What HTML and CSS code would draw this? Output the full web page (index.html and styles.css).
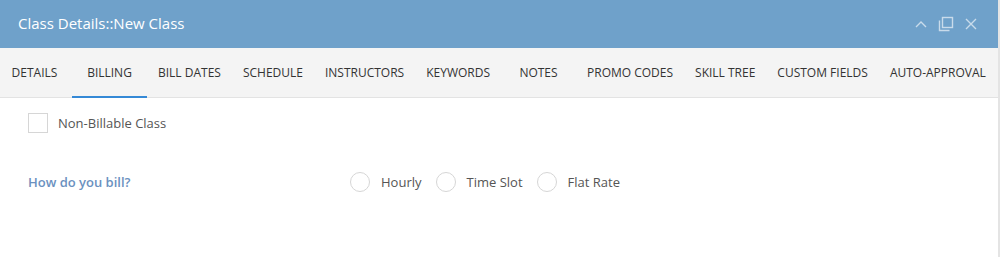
FILE: index.html
```html
<!DOCTYPE html>
<html>
<head>
<meta charset="utf-8">
<link rel="stylesheet" href="styles.css">
</head>
<body>
<div class="dialog">
  <div class="header">
    <div class="title">Class Details::New Class</div>
    <div class="controls">
      <svg class="icon" width="14" height="14" viewBox="0 0 14 14"><path d="M2 10 L7 5 L12 10" fill="none" stroke="currentColor" stroke-width="1.4"/></svg>
      <svg class="icon" width="16" height="16" viewBox="0 0 16 16"><rect x="4.5" y="1.5" width="10" height="10" fill="none" stroke="currentColor" stroke-width="1.4"/><path d="M1.5 4.5 V14.5 H11.5" fill="none" stroke="currentColor" stroke-width="1.4"/></svg>
      <svg class="icon" width="14" height="14" viewBox="0 0 14 14"><path d="M2 2 L12 12 M12 2 L2 12" fill="none" stroke="currentColor" stroke-width="1.4"/></svg>
    </div>
  </div>
  <div class="tabs">
    <div class="tab">DETAILS</div>
    <div class="tab active">BILLING</div>
    <div class="tab">BILL DATES</div>
    <div class="tab">SCHEDULE</div>
    <div class="tab">INSTRUCTORS</div>
    <div class="tab">KEYWORDS</div>
    <div class="tab">NOTES</div>
    <div class="tab">PROMO CODES</div>
    <div class="tab">SKILL TREE</div>
    <div class="tab">CUSTOM FIELDS</div>
    <div class="tab">AUTO-APPROVAL</div>
  </div>
  <div class="content">
    <label class="check-row">
      <span class="checkbox"></span>
      <span class="label">Non-Billable Class</span>
    </label>
    <div class="field-row">
      <div class="field-label">How do you bill?</div>
      <div class="radios">
        <label class="radio-item"><span class="radio"></span><span class="label">Hourly</span></label>
        <label class="radio-item"><span class="radio"></span><span class="label">Time Slot</span></label>
        <label class="radio-item"><span class="radio"></span><span class="label">Flat Rate</span></label>
      </div>
    </div>
  </div>
</div>
</body>
</html>
```

FILE: styles.css
```css
html, body {
  margin: 0;
  padding: 0;
}
body {
  width: 1000px;
  height: 257px;
  background: #e4e4e4;
  font-family: "Open Sans", "Liberation Sans", sans-serif;
  overflow: hidden;
}
.dialog {
  width: 998px;
  height: 257px;
  background: #ffffff;
  display: flex;
  flex-direction: column;
}
.header {
  height: 48px;
  background: #6fa1ca;
  display: flex;
  align-items: center;
  justify-content: space-between;
  padding: 0 20px 0 18px;
  box-sizing: border-box;
}
.title {
  color: #ffffff;
  font-size: 15px;
  line-height: 20px;
  margin-top: -2px;
}
.controls {
  display: flex;
  align-items: center;
  gap: 10px;
  color: #c9dbeb;
  margin-top: -1px;
}
.icon {
  display: block;
}
.tabs {
  height: 50px;
  background: #f4f4f4;
  border-bottom: 1px solid #e3e3e3;
  display: flex;
  margin-left: -3px;
  box-sizing: border-box;
}
.tab {
  min-width: 75px;
  box-sizing: border-box;
  padding: 0 11px;
  display: flex;
  align-items: center;
  justify-content: center;
  font-size: 12px;
  color: #333333;
  white-space: nowrap;
  padding-top: 1px;
  border-bottom: 2px solid transparent;
  margin-bottom: -1px;
}
.tab.active {
  border-bottom-color: #3589d6;
}
.content {
  padding: 15px 28px 0 28px;
}
.check-row {
  display: flex;
  align-items: center;
  gap: 10px;
  height: 20px;
}
.checkbox {
  width: 20px;
  height: 20px;
  box-sizing: border-box;
  border: 1.5px solid #d6d6d6;
  background: #fff;
}
.label {
  font-size: 13px;
  color: #555555;
}
.field-row {
  display: flex;
  align-items: center;
  margin-top: 39px;
  height: 20px;
}
.field-label {
  width: 322px;
  font-size: 13px;
  font-weight: 600;
  color: #6b91c0;
}
.radios {
  display: flex;
  align-items: center;
  gap: 14px;
}
.radio-item {
  display: flex;
  align-items: center;
  gap: 11px;
}
.radio {
  width: 20px;
  height: 20px;
  box-sizing: border-box;
  border: 1.5px solid #d6d6d6;
  border-radius: 50%;
  background: #fff;
}
```
